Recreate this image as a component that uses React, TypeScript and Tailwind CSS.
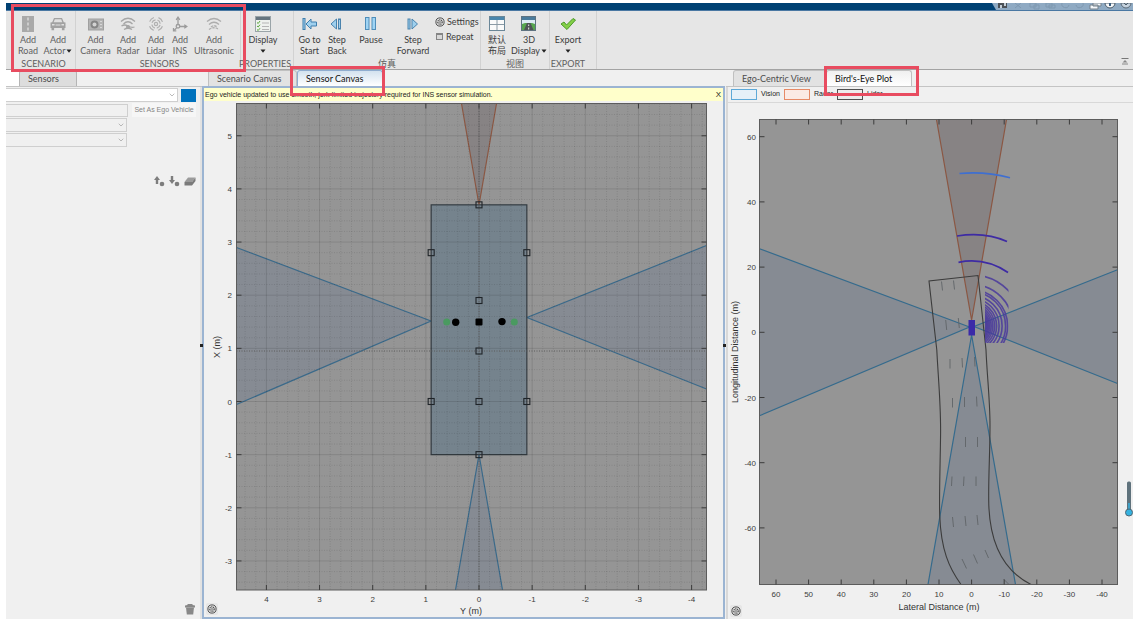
import React from 'react';
import { ChevronDown } from 'lucide-react';

const range = (from: number, to: number) => Array.from({ length: to - from + 1 }, (_, i) => from + i);

/* ---------- Toolstrip icons ---------- */

const RoadIcon = () => (
  <svg width="16" height="16" viewBox="0 0 16 16">
    <rect x="2" y="0" width="12" height="16" fill="#a9a9a9" />
    <path d="M8 1.5v3M8 6.5v3M8 11.5v3" stroke="#dcdcdc" strokeWidth="1.4" />
  </svg>
);

const CarIcon = () => (
  <svg width="16" height="16" viewBox="0 0 16 16" fill="#a2a2a2">
    <path d="M4 2h8l1.800 4.200 1.700.4v5.400h-1v2.200h-2.600V12H4.100v2.200H1.500V12h-1V6.600l1.700-.4z" />
    <path d="M4.800 3.300h6.400l1.100 3H3.700z" fill="#e0e0e0" />
    <path d="M2 8h2.600v1.600H2zM11.400 8H14v1.600h-2.600zM5.500 8.600h5v1h-5z" fill="#e0e0e0" />
  </svg>
);

const CameraIcon = () => (
  <svg width="16" height="16" viewBox="0 0 16 16">
    <rect x="0.5" y="3" width="15" height="11" fill="#b4b4b4" stroke="#a0a0a0" />
    <circle cx="6.500" cy="8.5" r="4" fill="#858585" />
    <circle cx="6.500" cy="8.5" r="2" fill="#d3d3d3" />
    <path d="M13 5v1M13 8v1M13 11v1" stroke="#eee" strokeWidth="1.2" />
  </svg>
);

const RadarIcon = () => (
  <svg width="16" height="16" viewBox="0 0 16 16" fill="none" stroke="#a6a6a6" strokeWidth="1.3">
    <path d="M1 5.5Q8-1 15 5.5M3.5 8Q8 3.5 12.5 8" />
    <path d="M1.500 10q3-2 6.500 0t6.500 1M4 13.500q4-2.500 8 0" />
    <circle cx="8" cy="11" r="1.4" fill="#a6a6a6" />
  </svg>
);

const LidarIcon = () => (
  <svg width="16" height="16" viewBox="0 0 16 16" fill="none" stroke="#b0b0b0" strokeWidth="1.2">
    <circle cx="8" cy="8" r="1.6" />
    <circle cx="8" cy="8" r="4.2" strokeDasharray="4.600 2" strokeDashoffset="-1" />
    <circle cx="8" cy="8" r="6.8" strokeDasharray="6 4.680" strokeDashoffset="-2.300" />
  </svg>
);

const InsIcon = () => (
  <svg width="16" height="16" viewBox="0 0 16 16" fill="none" stroke="#9c9c9c" strokeWidth="1.3">
    <path d="M6 8V2M7.500 10.500H14M4.500 12L2 14.500" />
    <path d="M4.200 3.800L6 1.200l1.800 2.600M12.200 8.700l2.600 1.800-2.600 1.800M1.500 12v2.800h2.800" />
    <circle cx="6" cy="10.300" r="1.800" />
  </svg>
);

const UltrasonicIcon = () => (
  <svg width="16" height="16" viewBox="0 0 16 16" fill="none" stroke="#adadad" strokeWidth="1.3">
    <path d="M1 5.500Q8-.5 15 5.500M3 8.500Q8 4 13 8.500" />
    <path d="M3 13.500Q8 10 13 13.500M5 11Q8 8.500 11 11" strokeDasharray="2.500 1" />
  </svg>
);

const DisplayIcon = () => (
  <svg width="16" height="16" viewBox="0 0 16 16">
    <rect x="0.5" y="0.5" width="15" height="15" fill="#eef1ee" stroke="#9aa4a8" />
    <path d="M1 1h14v3H1z" fill="#66757f" />
    <path d="M2 6.500l1.200 1L5 5M2 10l1.200 1L5 8.700M2 13.500l1.200 1L5 12.200" stroke="#5aa83a" fill="none" />
    <path d="M7 7h7M7 10.500h7M7 13.500h7" stroke="#b5b5b5" />
  </svg>
);

const GoStartIcon = () => (
  <svg width="16" height="16" viewBox="0 0 16 16" fill="#9fd0ee" stroke="#3f7fae">
    <rect x="1" y="2.500" width="2" height="11" />
    <path d="M4 8l5-5v3h5.500v4H9v3z" />
  </svg>
);

const StepBackIcon = () => (
  <svg width="16" height="16" viewBox="0 0 16 16" fill="#9fd0ee" stroke="#4a83ad">
    <path d="M7.500 3v10L2 8z" />
    <rect x="9.500" y="3" width="2" height="10" />
  </svg>
);

const PauseIcon = () => (
  <svg width="16" height="16" viewBox="0 0 16 16" fill="#9fd4f4" stroke="#4f8db9">
    <rect x="2.500" y="1.500" width="3.500" height="12" />
    <rect x="9" y="1.500" width="3.500" height="12" />
  </svg>
);

const StepForwardIcon = () => (
  <svg width="16" height="16" viewBox="0 0 16 16" fill="#9fd0ee" stroke="#4a83ad">
    <rect x="3" y="3" width="2" height="10" />
    <path d="M7 3v10l5.500-5z" />
  </svg>
);

const LayoutIcon = () => (
  <svg width="16" height="16" viewBox="0 0 16 16">
    <rect x="0.500" y="0.500" width="15" height="14" fill="#fafafa" stroke="#6b8798" />
    <path d="M1 1h14v3H1z" fill="#4b87ad" />
    <path d="M8 4v10M1 8.500h14" stroke="#8b9aa5" />
  </svg>
);

const Display3dIcon = () => (
  <svg width="16" height="16" viewBox="0 0 16 16">
    <rect x="0.500" y="0.500" width="14" height="14" fill="#dceaf2" stroke="#5f7381" />
    <path d="M1 1h13v3H1z" fill="#4b7c9c" />
    <path d="M1 8l3-1h7l3 1v6H1z" fill="#57a64e" />
    <path d="M6 7h3.500l3 7H3z" fill="#4f5456" />
    <path d="M7.700 8.500v1.500M7.700 11.500v2" stroke="#eee" />
  </svg>
);

const ExportIcon = () => (
  <svg width="16" height="16" viewBox="0 0 16 16">
    <path d="M1 8l3-2 2.500 3L13 2.500 15.500 4 7 13.500z" fill="#84cf48" stroke="#4c9a2a" />
  </svg>
);

const GearIcon = () => (
  <svg width="10" height="10" viewBox="0 0 10 10" fill="none" stroke="#4e4e4e">
    <circle cx="5" cy="5" r="4.100" strokeWidth="1" />
    <circle cx="5" cy="5" r="2.200" strokeWidth="1.300" strokeDasharray="1.200 .5" />
    <circle cx="5" cy="5" r="0.800" fill="#4e4e4e" stroke="none" />
  </svg>
);

/* ---------- Toolstrip ---------- */

interface ToolButtonProps {
  icon: React.ReactNode;
  lines: string[];
  width: string;
  disabled?: boolean;
  menu?: boolean;
}

function ToolButton({ icon, lines, width, disabled, menu }: ToolButtonProps) {
  const caret = (
    <svg className="inline-block" width="6" height="4" viewBox="0 0 6 4">
      <path d="M0.500 0.500h5L3 3.800z" fill="#222" />
    </svg>
  );
  return (
    <button
      type="button"
      disabled={disabled}
      className={`${width} flex shrink-0 flex-col items-center whitespace-nowrap leading-[11px] ${disabled ? 'text-[#606060]' : 'text-[#3c3c3c]'}`}
    >
      {icon}
      <span className="mt-0.5 h-[11px]">{lines[0]}</span>
      <span className="flex h-[11px] items-center gap-px">
        {lines[1]}
        {menu && caret}
      </span>
    </button>
  );
}

interface SectionProps {
  label: string;
  className: string;
  children: React.ReactNode;
}

function Section({ label, className, children }: SectionProps) {
  return (
    <div className={`${className} flex shrink-0 flex-col border-r border-[#d2d2d2] pt-[5px]`}>
      <div className="flex">{children}</div>
      <div className="mt-0.5 flex justify-center whitespace-nowrap leading-[11px] text-[#606060]">{label}</div>
    </div>
  );
}

function Toolstrip() {
  return (
    <div className="flex border-b border-[#a3a3a3] bg-[#e6e6e6] pl-1.5 font-[Lato,'Noto_Sans_CJK_SC',sans-serif] text-[9px]">
      <Section label="SCENARIO" className="w-16 px-0.5">
        <ToolButton icon={<RoadIcon />} lines={['Add', 'Road']} width="w-7" disabled />
        <ToolButton icon={<CarIcon />} lines={['Add', 'Actor']} width="w-8" disabled menu />
      </Section>
      <Section label="SENSORS" className="w-[165px] pl-[3px]">
        <ToolButton icon={<CameraIcon />} lines={['Add', 'Camera']} width="w-[33px]" disabled />
        <ToolButton icon={<RadarIcon />} lines={['Add', 'Radar']} width="w-8" disabled />
        <ToolButton icon={<LidarIcon />} lines={['Add', 'Lidar']} width="w-6" disabled />
        <ToolButton icon={<InsIcon />} lines={['Add', 'INS']} width="w-6" disabled />
        <ToolButton icon={<UltrasonicIcon />} lines={['Add', 'Ultrasonic']} width="w-11" disabled />
      </Section>
      <Section label="PROPERTIES" className="w-[53px] pr-1">
        <ToolButton icon={<DisplayIcon />} lines={['Display', '']} width="w-11" menu />
      </Section>
      <Section label="仿真" className="w-[187px] px-0.5">
        <ToolButton icon={<GoStartIcon />} lines={['Go to', 'Start']} width="w-[27px]" />
        <ToolButton icon={<StepBackIcon />} lines={['Step', 'Back']} width="w-7" />
        <ToolButton icon={<PauseIcon />} lines={['Pause', '']} width="w-10" />
        <ToolButton icon={<StepForwardIcon />} lines={['Step', 'Forward']} width="w-11" />
        <div className="flex flex-col gap-1 leading-[11px] text-[#3c3c3c]">
          <button type="button" className="flex items-center gap-0.5">
            <GearIcon />
            Settings
          </button>
          <label className="flex items-center gap-[3px] pl-px">
            <input
              type="checkbox"
              className="size-[7px] appearance-none border border-t-2 border-[#858585] bg-[#d8d8d8] checked:bg-[#4b87ad]"
            />
            Repeat
          </label>
        </div>
      </Section>
      <Section label="视图" className="w-[69px] px-0.5">
        <ToolButton icon={<LayoutIcon />} lines={['默认', '布局']} width="w-7" />
        <ToolButton icon={<Display3dIcon />} lines={['3D', 'Display']} width="w-9" menu />
      </Section>
      <Section label="EXPORT" className="w-[47px] pr-2.5">
        <ToolButton icon={<ExportIcon />} lines={['Export', '']} width="w-9" menu />
      </Section>
      <button type="button" aria-label="Minimize toolstrip" className="mt-auto mr-1 mb-1 ml-auto">
        <svg width="8" height="8" viewBox="0 0 8 8">
          <path d="M0.500 1.500h7" stroke="#777" />
          <path d="M4 3L1.500 5.500h5zM1 6.500h6v1H1z" fill="#888" />
        </svg>
      </button>
    </div>
  );
}

function TitleBar() {
  return (
    <div className="flex h-2 justify-end border-b border-[#4a78a3] bg-[#004173]">
      <svg width="141" height="7" viewBox="0 0 141 7">
        <path d="M0 0h141v7H4z" fill="#8faac3" />
        <path d="M6 0h9v5H6z" fill="#4b5157" />
        <path d="M8 2h2v3H8zM12 0h2v3h-2z" fill="#c5cfd8" />
        <g fill="none" stroke="#7f99b1">
          <path d="M23 0l6 5M29 0l-6 5M38 0h6v4h-6zM42 2h5v4h-5zM54 0h6v4h-6zM57 2h6v3h-6zM70 0a3 3 0 0 0 7 2M84 2a3 3 0 0 0 7-2" />
        </g>
        <path d="M101 0h8v3h-8zM98 2h8v4h-8z" fill="#f6f8fa" stroke="#75818c" />
        <path d="M113 0a5 5 0 0 0 10 0z" fill="#f6f8fa" stroke="#4c5b68" />
        <path d="M118 0v3" stroke="#3b5f80" strokeWidth="2" />
        <path d="M129 0a5 5 0 0 0 10 0z" fill="#c5d2de" stroke="#5c6b78" />
        <path d="M132 0l2 2 2-2" stroke="#4c5b68" fill="none" />
      </svg>
    </div>
  );
}

/* ---------- Panels ---------- */

function Tab({ label, className }: { label: string; className: string }) {
  return (
    <button
      type="button"
      className={`${className} h-4 rounded-t-[3px] border border-b-0 pl-2 text-left font-[Lato,sans-serif] text-[9px] leading-[15px] whitespace-nowrap`}
    >
      {label}
    </button>
  );
}

function ActorSelect({ label, className, disabled }: { label: string; className: string; disabled?: boolean }) {
  return (
    <div className={`${className} relative border border-l-0 border-[#cfcfcf]`}>
      <select aria-label={label} disabled={disabled} className="block h-full w-full appearance-none outline-none" />
      <ChevronDown className="pointer-events-none absolute top-0.5 right-px size-2 text-[#9a9a9a]" />
    </div>
  );
}

function ActorPanel() {
  return (
    <div className="flex flex-col">
      <div className="flex h-[17px] border-b border-[#c4c4c4] bg-[#f0f0f0]">
        <div className="w-[13px] bg-white" />
        <Tab label="Sensors" className="w-[58px] border-[#b5b5b5] bg-[#dddddd] text-[#4c4c4c]" />
      </div>
      <div className="flex grow flex-col border-r-2 border-[#e2e2e2] bg-[#f0f0f0] pt-px pr-1 font-['Liberation_Sans',sans-serif]">
        <div className="flex items-center gap-[3px]">
          <ActorSelect label="Actor" className="h-[14px] flex-1 bg-white" />
          <button type="button" aria-label="Actor color" className="h-[13px] w-[15px] bg-[#0072bd]" />
        </div>
        <div className="flex items-center gap-1">
          <input
            aria-label="Name"
            disabled
            className="h-[13px] min-w-0 flex-1 border border-l-0 border-[#cfcfcf] bg-[#f0f0f0]"
          />
          <button
            type="button"
            disabled
            className="my-px h-[14px] w-16 bg-[#f6f6f6] text-[7px] leading-[14px] whitespace-nowrap text-[#858585]"
          >
            Set As Ego Vehicle
          </button>
        </div>
        <ActorSelect label="Class" className="h-[14px] w-[121px]" disabled />
        <ActorSelect label="3D display type" className="mt-px h-[14px] w-[121px]" disabled />
        <div className="mt-[29px] flex justify-end gap-1">
          <button type="button" aria-label="Move up">
            <svg width="11" height="11" viewBox="0 0 11 11" fill="#7d7d7d">
              <path d="M3 0l3 4H4.200v4H1.800V4H0z" />
              <circle cx="8" cy="8" r="2.300" />
            </svg>
          </button>
          <button type="button" aria-label="Move down">
            <svg width="11" height="11" viewBox="0 0 11 11" fill="#7d7d7d">
              <path d="M3 8l3-4H4.200V0H1.800v4H0z" />
              <circle cx="8" cy="8" r="2.300" />
            </svg>
          </button>
          <button type="button" aria-label="Clear">
            <svg width="12" height="11" viewBox="0 0 12 11">
              <path d="M4 1.500h7.500L8 6H0.500z" fill="#9b9b9b" />
              <path d="M0.500 6H8L11.500 1.500v3.500L8 9.500H0.500z" fill="#7b7b7b" />
            </svg>
          </button>
        </div>
        <button type="button" aria-label="Delete" className="mt-auto mb-1 self-end">
          <svg width="12" height="12" viewBox="0 0 12 12" fill="#888">
            <path d="M1 2.500L3.500 2V1h5v1l2.500.5v2H1z" />
            <path d="M2 4.500h8l-.8 7H2.800z" />
          </svg>
        </button>
      </div>
    </div>
  );
}

/* Ticks on opposite sides of an axes box */
function HTicks({ xs, top, bottom }: { xs: number[]; top: number; bottom: number }) {
  return (
    <g stroke="#3c3c3c">
      {xs.map((x) => (
        <path key={x} d={`M${x} ${top}v5M${x} ${bottom}v-5`} />
      ))}
    </g>
  );
}

function VTicks({ ys, left, right }: { ys: number[]; left: number; right: number }) {
  return (
    <g stroke="#3c3c3c">
      {ys.map((y) => (
        <path key={y} d={`M${left} ${y}h5M${right} ${y}h-5`} />
      ))}
    </g>
  );
}

// Axes box of the sensor canvas and the position of its origin
const SC = { left: 236.5, right: 706.5, top: 103.5, bottom: 590, ox: 479, oy: 401.5, unit: 53.15 };

function SensorCanvas() {
  const x = (v: number) => SC.ox - v * SC.unit;
  const y = (v: number) => SC.oy - v * SC.unit;
  const major = { xs: range(-4, 4), ys: range(-3, 5) };
  const minorX = range(-21, 22).filter((i) => i % 5 !== 0);
  const minorY = range(-17, 28).filter((i) => i % 5 !== 0);
  const mounts = [
    [0, 3.7], [0.9, 2.8], [-0.9, 2.8], [0, 1.9], [0, 0.95],
    [0.9, 0], [0, 0], [-0.9, 0], [0, -1],
  ];

  return (
    <svg className="block w-full" viewBox="204 101 519 516" fontFamily="Liberation Sans, sans-serif">
      <rect x={SC.left} y={SC.top} width={SC.right - SC.left} height={SC.bottom - SC.top} fill="#959595" />
      <g fill="#868b93" stroke="#3b6a8a" strokeWidth="1.200">
        <path d="M236.500 247.500L431 321 236.500 404.500" />
        <path d="M706.500 245.500L527 317.500 706.500 389" />
        <path d="M455.500 590L479 454.500 502.500 590" />
      </g>
      <path d="M461.500 103.500L479 205 496.500 103.500" fill="#878384" stroke="#8b5743" strokeWidth="1.200" />
      <rect x={x(0.9)} y={y(3.7)} width={x(-0.9) - x(0.9)} height={y(-1) - y(3.7)} fill="#75838d" stroke="#343c42" strokeWidth="1.200" />

      <g stroke="#000" strokeOpacity="0.11" strokeDasharray="1 1.500">
        {minorX.map((i) => <path key={i} d={`M${x(i / 5)} ${SC.top}V${SC.bottom}`} />)}
        {minorY.map((i) => <path key={i} d={`M${SC.left} ${y(i / 5)}H${SC.right}`} />)}
      </g>
      <g stroke="#000" strokeOpacity="0.110">
        {major.xs.map((v) => <path key={v} d={`M${x(v)} ${SC.top}V${SC.bottom}`} />)}
        {major.ys.map((v) => <path key={v} d={`M${SC.left} ${y(v)}H${SC.right}`} />)}
      </g>
      <path
        d={`M${x(0)} ${SC.top}V${SC.bottom}M${SC.left} ${y(0.95)}H${SC.right}`}
        stroke="#5c5c5c"
        strokeDasharray="1 1.500"
      />
      <rect x={SC.left} y={SC.top} width={SC.right - SC.left} height={SC.bottom - SC.top} fill="none" stroke="#5c5c5c" />
      <HTicks xs={major.xs.map(x)} top={SC.top} bottom={SC.bottom} />
      <VTicks ys={major.ys.map(y)} left={SC.left} right={SC.right} />

      <g fill="none" stroke="#1f2428" strokeWidth="1.100">
        {mounts.map(([my, mx]) => (
          <rect key={`${my},${mx}`} x={x(my) - 3} y={y(mx) - 3} width="6" height="6" />
        ))}
      </g>
      <rect x="475.500" y="318.500" width="7" height="7" rx="1" />
      <circle cx="446.700" cy="322" r="3.500" fill="#4a9a60" />
      <circle cx="455.700" cy="322.300" r="3.700" />
      <circle cx="502" cy="321.600" r="3.700" />
      <circle cx="514.300" cy="322" r="3.500" fill="#4a9a60" />

      <g fontSize="8" fill="#3c3c3c" textAnchor="middle">
        {major.xs.map((v) => <text key={v} x={x(v)} y="602">{v}</text>)}
      </g>
      <g fontSize="8" fill="#3c3c3c" textAnchor="end">
        {major.ys.map((v) => <text key={v} x="232" y={y(v) + 3}>{v}</text>)}
      </g>
      <text x="471" y="614" fontSize="9" fill="#333" textAnchor="middle">Y (m)</text>
      <text transform="translate(220 347) rotate(-90)" fontSize="9" fill="#333" textAnchor="middle">X (m)</text>
    </svg>
  );
}

const BEP = { left: 759.5, right: 1117.5, top: 119.5, bottom: 584.5, ox: 971.6, oy: 332.3, unit: 3.26 };

const laneDashes =
  'M941.500 281.500l1 9M953.500 280.500l1 9M945.700 320l1 10M958.300 318l1 10M950 359v9.500M962 358l.5 9.500M974.500 357l.5 9.500' +
  'M952.500 398v9.500M964.500 397v10M976.500 396.500l.5 10M965.500 437v10M977.500 437v10M952 476.500l-.5 9.500M964 476.500l-.5 9.500M976 476.500v9.500' +
  'M952.500 517l1 10M965 516l1 10M977 515l1 10M962 559l4.500 9.500M973.500 554.500l4 9M985 550l3.500 8M1003.500 579l5 5';

const lidarRadii = [51, 41.5, 36, 34, 30.5, 27.5, 25, 23, 21.2, 19.6, 18.2, 17, 15.9, 14.9, 14];

function BirdsEyePlot() {
  const x = (v: number) => BEP.ox - v * BEP.unit;
  const y = (v: number) => BEP.oy - v * BEP.unit;
  const xTicks = range(-4, 6).map((v) => v * 10);
  const yTicks = range(-3, 3).map((v) => v * 20);

  return (
    <svg className="block w-full" viewBox="728 103 405 516" fontFamily="Liberation Sans, sans-serif">
      <defs>
        <clipPath id="lidar-sweep">
          <rect x="985" y="270" width="23.500" height="73" />
        </clipPath>
      </defs>
      <rect x={BEP.left} y={BEP.top} width={BEP.right - BEP.left} height={BEP.bottom - BEP.top} fill="#959595" />
      <g fill="#868b93" stroke="#356b8d" strokeWidth="1.200">
        <path d="M759.500 248.700L969.500 327 759.500 415.700" />
        <path d="M1117.500 269.700L974 326.500 1117.500 383.500" />
        <path d="M928 584.500L971.600 335 1015.500 584.500" />
      </g>
      <path d="M936.500 119.500L971.600 320 1006.500 119.500" fill="#878384" stroke="#8b5743" strokeWidth="1.200" />
      <path
        d="M961 584.500C949 568 941 550 939.700 515C939 495 940.600 450 940.600 430C940.600 400 938 375 936.800 350L929 281 978 275.500L986 350C987 375 990 400 990 425C990 455 988.500 470 988.700 500C989 550 1008 573 1031 584.500"
        fill="none"
        stroke="#3c3c3c"
        strokeWidth="1.100"
      />
      <path d={laneDashes} stroke="#606468" strokeWidth="0.900" fill="none" />

      <path d="M959.500 173.500Q985 171 1010 177.800" stroke="#3f6fd0" strokeWidth="1.600" fill="none" />
      <g stroke="#3e2ba4" strokeWidth="1.700" fill="none">
        <path d="M957 236Q985 231.500 1007 241.500" />
        <path d="M958.500 262.300Q985 257 1008 272.500" />
      </g>
      <g clipPath="url(#lidar-sweep)" stroke="#4a3a9c" strokeOpacity="0.850" strokeWidth="1.600" fill="none">
        {lidarRadii.map((r) => (
          <circle key={r} cx={BEP.ox} cy="326" r={r} />
        ))}
      </g>
      <rect x="968.500" y="320" width="6.500" height="15.500" fill="#3b2aa8" />

      <rect x={BEP.left} y={BEP.top} width={BEP.right - BEP.left} height={BEP.bottom - BEP.top} fill="none" stroke="#5c5c5c" />
      <HTicks xs={xTicks.map(x)} top={BEP.top} bottom={BEP.bottom} />
      <VTicks ys={yTicks.map(y)} left={BEP.left} right={BEP.right} />

      <g fontSize="8" fill="#3c3c3c" textAnchor="middle">
        {xTicks.map((v) => <text key={v} x={x(v)} y="597">{v}</text>)}
      </g>
      <g fontSize="8" fill="#3c3c3c" textAnchor="end">
        {yTicks.map((v) => <text key={v} x="756" y={y(v) + 3}>{v}</text>)}
      </g>
      <text x="939" y="610" fontSize="9" fill="#333" textAnchor="middle">Lateral Distance (m)</text>
      <text transform="translate(738 352) rotate(-90)" fontSize="9" fill="#333" textAnchor="middle">
        Longitudinal Distance (m)
      </text>

      {/* Zoom thermometer */}
      <rect x="1127" y="481.500" width="4" height="30" rx="1.500" fill="#5f727c" />
      <path d="M1129 503v8" stroke="#35b2e0" strokeWidth="1.500" />
      <circle cx="1129" cy="512.500" r="3.500" fill="#35b2e0" stroke="#4e6673" />
    </svg>
  );
}

function SettingsButton({ label }: { label: string }) {
  return (
    <button type="button" aria-label={label} className="absolute bottom-0.5 left-0.5 rounded-xs bg-[#e6e6e6] p-px">
      <GearIcon />
    </button>
  );
}

function SplitHandle() {
  return <div className="absolute top-[274px] -left-0.5 size-[3px] bg-[#222]" />;
}

const legend = [
  { label: 'Vision', swatch: 'border-[#5ea9d8] bg-[#e6f0f8]' },
  { label: 'Radar', swatch: 'border-[#e68a66] bg-[#fbeae4]' },
  { label: 'Lidar', swatch: 'border-[#505050] bg-[#ececec]' },
];

export default function App() {
  return (
    <div className="min-h-screen bg-white pt-[3px] pr-0.5 pb-[9px] pl-1.5">
      <TitleBar />
      <Toolstrip />
      <div className="grid grid-cols-[196px_minmax(0,523fr)_minmax(0,408fr)] bg-[#f0f0f0]">
        <ActorPanel />

        {/* Sensor canvas */}
        <div className="relative flex flex-col">
          <div className="flex h-4 pl-1.5">
            <Tab label="Scenario Canvas" className="w-[89px] border-[#c0c0c0] bg-[#e2e2e2] text-[#4c4c4c]" />
            <Tab label="Sensor Canvas" className="w-[86px] border-[#8fadd0] bg-linear-to-b from-[#d3e2ef] to-white text-[#111]" />
          </div>
          <div className="relative grow border-2 border-[#9bb4d2]">
            <div className="flex h-[13px] items-center bg-[#ffffcb] pl-px font-['Liberation_Sans',sans-serif] text-[7px] leading-[13px] text-[#222]">
              <span className="truncate">
                Ego vehicle updated to use smooth, jerk-limited trajectory required for INS sensor simulation.
              </span>
              <button type="button" className="mr-px ml-auto px-px text-[8px]">X</button>
            </div>
            <SensorCanvas />
            <SettingsButton label="Sensor canvas settings" />
          </div>
          <SplitHandle />
        </div>

        {/* Bird's-eye plot */}
        <div className="relative flex flex-col pl-px">
          <div className="flex h-[17px] border-b border-[#c4c4c4] pl-[7px]">
            <Tab label="Ego-Centric View" className="w-[93px] border-[#c0c0c0] bg-[#e2e2e2] text-[#4c4c4c]" />
            <Tab label="Bird's-Eye Plot" className="w-[86px] border-[#c0c0c0] bg-linear-to-b from-[#f0f0f0] to-white text-[#111]" />
          </div>
          <div className="relative grow border-l-2 border-[#d8d8d8]">
            <div className="flex h-4 items-center gap-1 border-b border-[#d8d8d8] pl-[3px] font-['Liberation_Sans',sans-serif] text-[7px] text-[#222]">
              {legend.map((item) => (
                <div key={item.label} className="flex w-[49px] items-center gap-1">
                  <span className={`h-[11px] w-[26px] shrink-0 border ${item.swatch}`} />
                  {item.label}
                </div>
              ))}
            </div>
            <BirdsEyePlot />
            <SettingsButton label="Bird's-eye plot settings" />
          </div>
          <SplitHandle />
        </div>
      </div>

      {/* Highlight frames over the toolstrip sections and active tabs */}
      <div className="pointer-events-none absolute top-1 left-[11px] h-[68px] w-[235px] border-3 border-[#e84c60]" />
      <div className="pointer-events-none absolute top-[66px] left-[290px] h-[30px] w-[95px] border-3 border-[#e84c60]" />
      <div className="pointer-events-none absolute top-[66px] right-[216px] h-[30px] w-[95px] border-3 border-[#e84c60]" />
    </div>
  );
}
